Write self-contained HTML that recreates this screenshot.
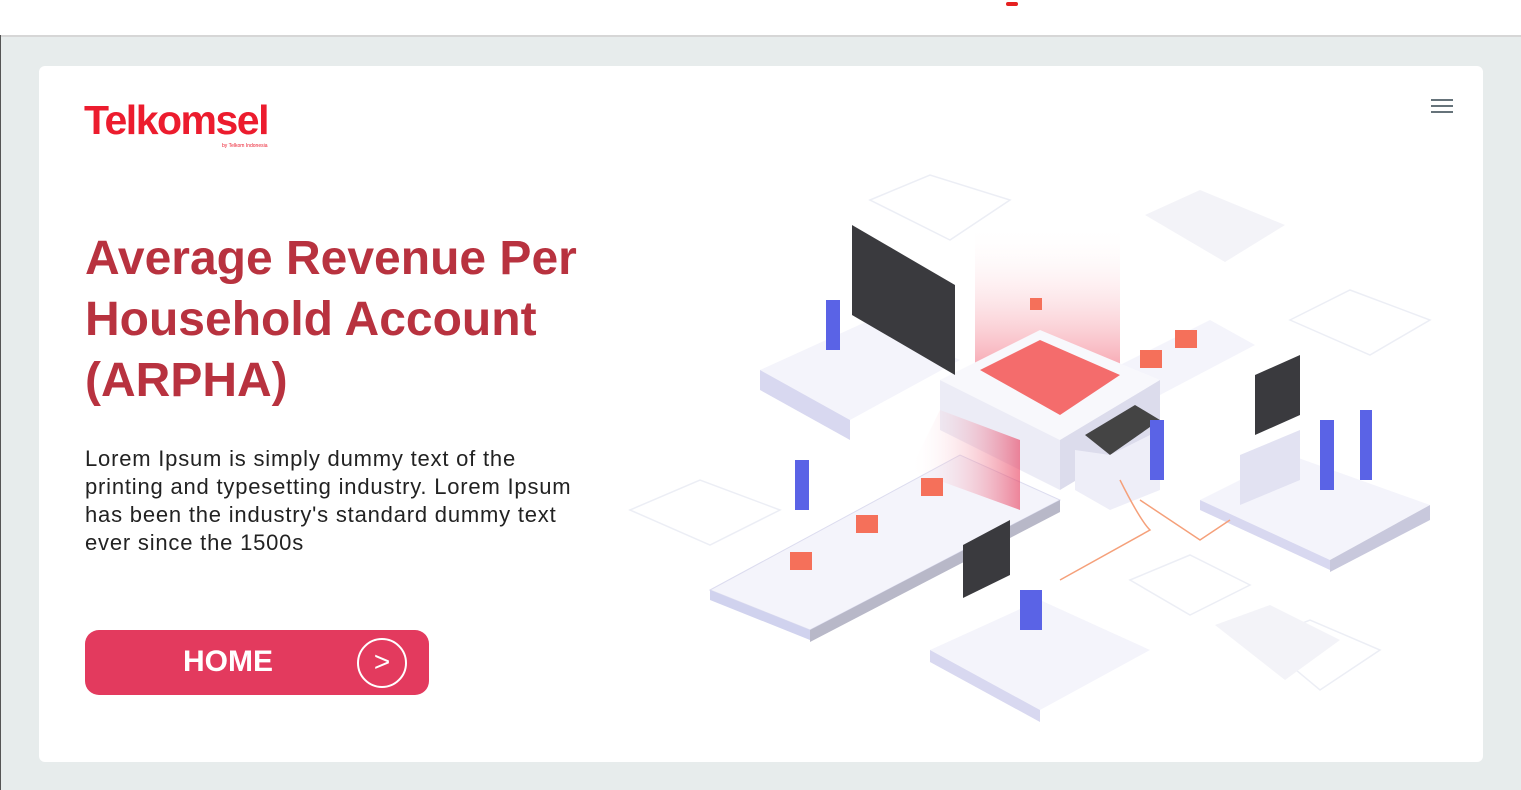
<!DOCTYPE html>
<html><head><meta charset="utf-8"><style>
body{margin:0;width:1521px;height:790px;background:#e7ecec;font-family:"Liberation Sans",sans-serif;position:relative;overflow:hidden}
.top{position:absolute;left:0;top:0;width:1521px;height:35px;background:#fff;border-bottom:2px solid #d6d6d6}
.lb{position:absolute;left:0;top:35px;width:1px;height:755px;background:#555}
.card{position:absolute;left:39px;top:66px;width:1444px;height:696px;background:#fff;border-radius:6px}
.logo{position:absolute;left:84px;top:97px;color:#ec1c2e;font-weight:bold;font-size:41px;letter-spacing:-1.5px}
.sub{position:absolute;left:222px;top:143px;color:#ec1c2e;font-size:5px}
h1{position:absolute;left:85px;top:228px;margin:0;color:#b8323f;font-size:48px;line-height:61px;font-weight:bold;width:560px;letter-spacing:0px}
p{position:absolute;left:85px;top:445px;margin:0;color:#222;font-size:22px;line-height:28px;width:560px;white-space:nowrap;letter-spacing:0.8px;font-weight:300}
.btn{position:absolute;left:85px;top:630px;width:344px;height:65px;background:#e33a5e;border-radius:14px;color:#fff}
.btn span{position:absolute;left:98px;top:15px;font-size:30px;font-weight:bold}
.btn i{position:absolute;left:272px;top:8px;width:46px;height:46px;border:2px solid #fff;border-radius:50%;font-style:normal;font-size:28px;text-align:center;line-height:44px}
.menu{position:absolute;left:1431px;top:99px;width:22px}
.menu div{height:2px;background:#66737a;margin-bottom:4px}
</style></head><body>
<div class="top"></div><div class="lb"></div>
<div style="position:absolute;left:1006px;top:2px;width:12px;height:4px;background:#e52020;border-radius:2px"></div>
<div class="card"></div>
<div class="logo">Telkomsel</div><div class="sub">by Telkom Indonesia</div>
<div class="menu"><div></div><div></div><div></div></div>
<h1>Average Revenue Per Household Account (ARPHA)</h1>
<p>Lorem Ipsum is simply dummy text of the<br>printing and typesetting industry. Lorem Ipsum<br>has been the industry's standard dummy text<br>ever since the 1500s</p>
<div class="btn"><span>HOME</span><i>&gt;</i></div>
<svg style="position:absolute;left:0;top:0" width="1521" height="790">
<defs><linearGradient id="g" x1="0" y1="0" x2="0" y2="1"><stop offset="0" stop-color="#fff" stop-opacity="0"/><stop offset="1" stop-color="#f05a6e"/></linearGradient>
<linearGradient id="g2" x1="0" y1="0" x2="1" y2="0"><stop offset="0" stop-color="#fff" stop-opacity="0"/><stop offset="1" stop-color="#e83a5a"/></linearGradient></defs>
<g fill="none" stroke="#eceef5" stroke-width="1.5">
<path d="M870 200 L930 175 L1010 200 L950 240 Z"/><path d="M1290 320 L1350 290 L1430 320 L1370 355 Z"/><path d="M630 510 L700 480 L780 510 L710 545 Z"/><path d="M1130 580 L1190 555 L1250 585 L1190 615 Z"/><path d="M1260 640 L1310 620 L1380 650 L1320 690 Z"/>
</g>
<path d="M710 590 L960 455 L1060 500 L810 630 Z" fill="#f4f4fb" stroke="#dcdcef"/>
<path d="M710 590 L810 630 L810 640 L710 600 Z" fill="#d0d2ee"/>
<path d="M810 630 L1060 500 L1060 512 L810 642 Z" fill="#b8b8c8"/>
<path d="M760 370 L870 320 L960 360 L850 420 Z" fill="#f4f4fb"/>
<path d="M760 370 L850 420 L850 440 L760 390 Z" fill="#d8d8f0"/>
<path d="M1110 370 L1210 320 L1255 345 L1160 395 Z" fill="#f4f4fb"/>
<path d="M1200 500 L1290 455 L1430 505 L1330 560 Z" fill="#f4f4fb"/>
<path d="M1200 500 L1330 560 L1330 570 L1200 510 Z" fill="#d8d8f0"/>
<path d="M1330 560 L1430 505 L1430 520 L1330 572 Z" fill="#c8c8dc"/>
<path d="M930 650 L1040 600 L1150 650 L1040 710 Z" fill="#f4f4fb"/>
<path d="M930 650 L1040 710 L1040 722 L930 662 Z" fill="#d8d8f0"/>
<path d="M1145 215 L1200 190 L1285 225 L1225 262 Z" fill="#f3f3f8"/>
<path d="M1215 625 L1270 605 L1340 640 L1285 680 Z" fill="#f3f3f8"/>
<path d="M975 225 L1120 225 L1120 390 L975 390 Z" fill="url(#g)" opacity=".7"/>
<path d="M940 380 L1040 330 L1160 380 L1060 440 Z" fill="#f8f8fc"/>
<path d="M940 380 L1060 440 L1060 490 L940 430 Z" fill="#ececf6"/>
<path d="M1060 440 L1160 380 L1160 430 L1060 490 Z" fill="#dcdcec"/>
<path d="M980 370 L1040 340 L1120 375 L1060 415 Z" fill="#f46c6c"/>
<path d="M940 410 L1020 440 L1020 510 L910 470 Z" fill="url(#g2)" opacity=".6"/>
<path d="M852 225 L955 285 L955 375 L852 315 Z" fill="#3a3a3e"/>
<path d="M1255 375 L1300 355 L1300 415 L1255 435 Z" fill="#3a3a3e"/>
<path d="M963 545 L1010 520 L1010 575 L963 598 Z" fill="#3a3a3e"/>
<path d="M1085 435 L1135 405 L1160 420 L1110 455 Z" fill="#444"/>
<path d="M1075 450 L1110 455 L1160 430 L1160 490 L1110 510 L1075 490 Z" fill="#eeeef8"/>
<path d="M1240 455 L1300 430 L1300 480 L1240 505 Z" fill="#e2e2f2"/>
<g fill="#5a63e6"><rect x="826" y="300" width="14" height="50"/><rect x="795" y="460" width="14" height="50"/><rect x="1150" y="420" width="14" height="60"/><rect x="1320" y="420" width="14" height="70"/><rect x="1360" y="410" width="12" height="70"/><rect x="1020" y="590" width="22" height="40"/></g>
<g fill="#f5705a"><rect x="921" y="478" width="22" height="18"/><rect x="856" y="515" width="22" height="18"/><rect x="790" y="552" width="22" height="18"/><rect x="1175" y="330" width="22" height="18"/><rect x="1140" y="350" width="22" height="18"/><rect x="1030" y="298" width="12" height="12"/></g>
<path d="M1120 480 Q1140 520 1150 530 L1060 580 M1140 500 L1200 540 L1230 520" fill="none" stroke="#f5a07a" stroke-width="1.5"/>
</svg>
</body></html>
